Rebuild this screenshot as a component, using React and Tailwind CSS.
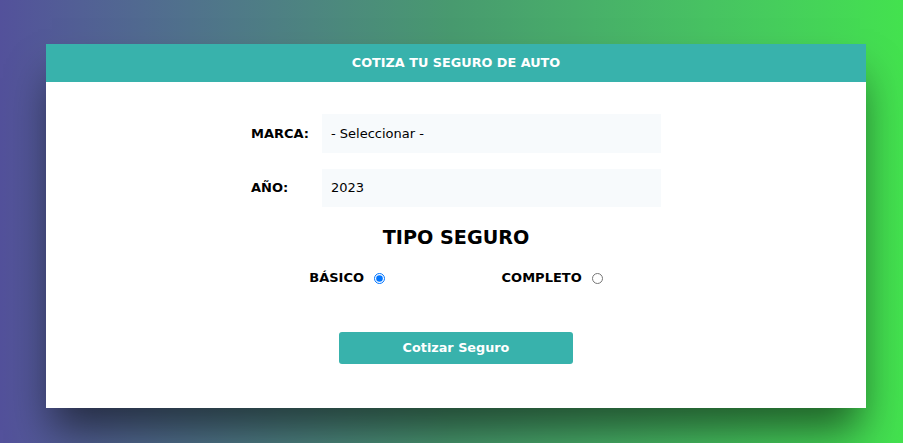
import { useState } from 'react';

const MARCAS = ['Europeo', 'Americano', 'Asiático'];
const YEARS = Array.from({ length: 20 }, (_, i) => 2023 - i);

export default function App() {
  const [marca, setMarca] = useState('');
  const [year, setYear] = useState(2023);
  const [plan, setPlan] = useState('basico');

  return (
    <div
      className="min-h-screen w-full bg-gradient-to-r from-[#53519b] via-[#489a6f] to-[#43e24e] pl-[46px] pt-[44px] pb-[35px]"
      style={{ fontFamily: '"DejaVu Sans", sans-serif' }}
    >
      <div className="w-[820px] bg-white shadow-[0_28px_40px_-6px_rgba(0,0,0,0.55)]">
        {/* Header */}
        <header className="h-[38px] bg-[#38b2ac] flex items-center justify-center">
          <h1 className="text-[12.8px] font-bold text-white">COTIZA TU SEGURO DE AUTO</h1>
        </header>

        {/* Form */}
        <form
          onSubmit={(e) => e.preventDefault()}
          className="w-[410px] mx-auto pt-[32px] pb-[44px] text-black"
        >
          <div className="flex items-center">
            <label className="w-[71px] text-[13px] font-bold">MARCA:</label>
            <select
              value={marca}
              onChange={(e) => setMarca(e.target.value)}
              className="flex-1 h-[39px] bg-[#f7fafc] px-[9px] text-[13px] appearance-none outline-none"
            >
              <option value="">- Seleccionar -</option>
              {MARCAS.map((m) => (
                <option key={m} value={m}>
                  {m}
                </option>
              ))}
            </select>
          </div>

          <div className="flex items-center mt-[16px]">
            <label className="w-[71px] text-[13px] font-bold">AÑO:</label>
            <select
              value={year}
              onChange={(e) => setYear(e.target.value)}
              className="flex-1 h-[38px] bg-[#f7fafc] px-[9px] text-[13px] appearance-none outline-none"
            >
              {YEARS.map((y) => (
                <option key={y} value={y}>
                  {y}
                </option>
              ))}
            </select>
          </div>

          <h2 className="mt-[17px] text-[19.2px] leading-7 font-bold text-center">TIPO SEGURO</h2>

          <div className="mt-[16px] flex justify-around items-center h-5">
            <label className="flex items-center gap-[10px] text-[13px] font-bold">
              BÁSICO
              <input
                type="radio"
                name="plan"
                checked={plan === 'basico'}
                onChange={() => setPlan('basico')}
                className="w-[11px] h-[11px] m-0"
              />
            </label>
            <label className="flex items-center gap-[10px] text-[13px] font-bold">
              COMPLETO
              <input
                type="radio"
                name="plan"
                checked={plan === 'completo'}
                onChange={() => setPlan('completo')}
                className="w-[11px] h-[11px] m-0"
              />
            </label>
          </div>

          <button
            type="submit"
            className="block mx-auto mt-[44px] w-[234px] h-[32px] rounded-[3px] bg-[#38b2ac] text-white text-[12.8px] font-bold"
          >
            Cotizar Seguro
          </button>
        </form>
      </div>
    </div>
  );
}
